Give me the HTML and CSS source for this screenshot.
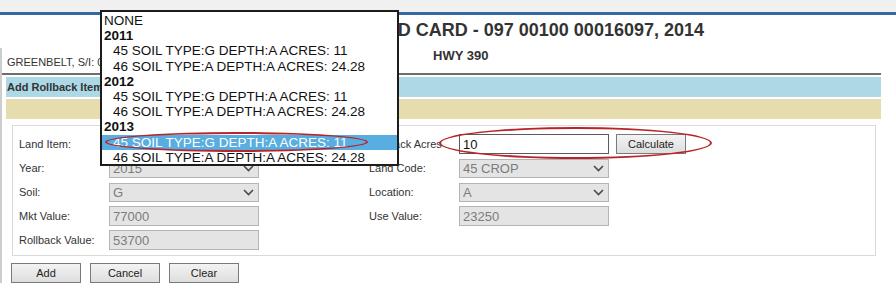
FILE: index.html
```html
<!DOCTYPE html>
<html>
<head>
<meta charset="UTF-8">
<title>Rollback Land Card</title>
<link rel="stylesheet" href="styles.css">
</head>
<body>
<div class="topbar"></div>
<h1 class="title">ROLLBACK LAND CARD - 097 00100 00016097, 2014</h1>
<div class="main">
  <div class="addr">
    <span class="loc">GREENBELT, S/I: 0</span>
    <span class="hwy">HWY 390</span>
  </div>
  <div class="rule"></div>
  <div class="band blue">Add Rollback Item</div>
  <div class="band tan"></div>

  <div class="formbox">
    <div class="grid">
      <label>Land Item:</label>
      <div class="sel"><span></span><svg width="11" height="7" viewBox="0 0 11 7"><polyline points="1,1 5.5,5.5 10,1" /></svg></div>
      <span></span>
      <label>Rollback Acres</label>
      <input class="txt" type="text" value="10">
      <button class="btn calc">Calculate</button>

      <label>Year:</label>
      <div class="sel"><span>2015</span><svg width="11" height="7" viewBox="0 0 11 7"><polyline points="1,1 5.5,5.5 10,1" /></svg></div>
      <span></span>
      <label>Land Code:</label>
      <div class="sel"><span>45 CROP</span><svg width="11" height="7" viewBox="0 0 11 7"><polyline points="1,1 5.5,5.5 10,1" /></svg></div>
      <span></span>

      <label>Soil:</label>
      <div class="sel"><span>G</span><svg width="11" height="7" viewBox="0 0 11 7"><polyline points="1,1 5.5,5.5 10,1" /></svg></div>
      <span></span>
      <label>Location:</label>
      <div class="sel"><span>A</span><svg width="11" height="7" viewBox="0 0 11 7"><polyline points="1,1 5.5,5.5 10,1" /></svg></div>
      <span></span>

      <label>Mkt Value:</label>
      <input class="ro" type="text" value="77000" readonly>
      <span></span>
      <label>Use Value:</label>
      <input class="ro" type="text" value="23250" readonly>
      <span></span>

      <label>Rollback Value:</label>
      <input class="ro" type="text" value="53700" readonly>
      <span></span>
      <span></span>
      <span></span>
      <span></span>
    </div>
  </div>

  <div class="actions">
    <button class="btn">Add</button>
    <button class="btn">Cancel</button>
    <button class="btn">Clear</button>
  </div>
</div>

<div class="dropdown">
  <div class="opt">NONE</div>
  <div class="grp">2011</div>
  <div class="opt sub">45 SOIL TYPE:G DEPTH:A ACRES: 11</div>
  <div class="opt sub">46 SOIL TYPE:A DEPTH:A ACRES: 24.28</div>
  <div class="grp">2012</div>
  <div class="opt sub">45 SOIL TYPE:G DEPTH:A ACRES: 11</div>
  <div class="opt sub">46 SOIL TYPE:A DEPTH:A ACRES: 24.28</div>
  <div class="grp">2013</div>
  <div class="opt sub hl">45 SOIL TYPE:G DEPTH:A ACRES: 11</div>
  <div class="opt sub">46 SOIL TYPE:A DEPTH:A ACRES: 24.28</div>
</div>
<div class="ring ring-item"></div>
<div class="ring ring-acres"></div>
</body>
</html>
```
FILE: styles.css
```css
body {
margin: 0;
background: #fff;
font-family: "Liberation Sans", Arial, sans-serif;
color: #333;
position: relative;
}
.topbar {
height: 12px;
background: #f0f0f0;
border-bottom: 3px solid #3567a0;
}
h1.title {
margin: 5px 0 0 0;
height: 28px;
line-height: 20px;
font-size: 18px;
font-weight: bold;
color: #333;
text-align: right;
padding-right: 192px;
white-space: nowrap;
}
.main {
border-left: 2px solid #cdcdcd;
}
.addr {
display: flex;
align-items: flex-start;
height: 25px;
}
.loc {
width: 426px;
padding-left: 5px;
margin-top: 8px;
font-size: 11px;
line-height: 13px;
}
.hwy {
font-size: 13px;
font-weight: bold;
line-height: 15px;
}
.rule {
width: 879px;
height: 2px;
background: #6e6e6e;
margin-bottom: 2px;
}
.band {
margin-left: 4px;
width: 875px;
height: 20px;
}
.band.blue {
background: #add8e6;
font-size: 11px;
font-weight: bold;
line-height: 20px;
padding-left: 1px;
box-sizing: border-box;
}
.band.tan {
background: #e6dcae;
margin-top: 2px;
}
.formbox {
margin: 6px 0 0 10px;
width: 864px;
box-sizing: border-box;
border: 1px solid #dadada;
padding: 6px 6px 3px 6px;
}
.grid {
display: grid;
grid-template-columns: 90px 150px 110px 90px 150px 1fr;
grid-auto-rows: 24px;
align-items: center;
}
.grid label {
font-size: 11px;
color: #333;
white-space: nowrap;
}
.sel {
height: 19px;
box-sizing: border-box;
border: 1px solid #b4b4b4;
background: #e4e4e4;
display: flex;
align-items: center;
padding: 0 4px 0 3px;
font-size: 13px;
color: #7c7c7c;
}
.sel span {
flex: 1;
white-space: nowrap;
overflow: hidden;
}
.sel svg polyline {
fill: none;
stroke: #4a4a4a;
stroke-width: 1.6;
}
input.ro, input.txt {
width: 150px;
height: 20px;
box-sizing: border-box;
margin: 0;
padding: 0 3px;
font: 13px "Liberation Sans", Arial, sans-serif;
}
input.ro {
border: 1px solid #b4b4b4;
background: #e4e4e4;
color: #7c7c7c;
}
input.txt {
border: 1px solid #5a5a5a;
background: #fff;
color: #111;
}
button.btn {
width: 70px;
height: 20px;
padding: 0;
border: 1px solid #7a7a7a;
background: linear-gradient(#f3f3f3, #dedede);
font: 11px "Liberation Sans", Arial, sans-serif;
color: #222;
}
button.calc {
justify-self: start;
margin-left: 7px;
height: 20px;
}
.actions {
display: flex;
gap: 9px;
margin: 7px 0 0 9px;
}
.dropdown {
position: absolute;
left: 100px;
top: 10px;
width: 299px;
height: 156px;
box-sizing: border-box;
border: 2px solid #1c1c1c;
background: #fff;
padding-top: 1px;
font-size: 13.5px;
color: #111;
}
.dropdown .opt, .dropdown .grp {
height: 15.2px;
line-height: 15.2px;
padding-left: 2px;
white-space: nowrap;
}
.dropdown .grp {
font-weight: bold;
}
.dropdown .sub {
padding-left: 11px;
}
.dropdown .hl {
background: #58aee0;
color: #fff;
}
.ring {
position: absolute;
box-sizing: border-box;
border: 2px solid #b9242b;
border-radius: 50%;
}
.ring-item {
left: 105px;
top: 132px;
width: 263px;
height: 20px;
}
.ring-acres {
left: 439px;
top: 127px;
width: 273px;
height: 32px;
}
```
